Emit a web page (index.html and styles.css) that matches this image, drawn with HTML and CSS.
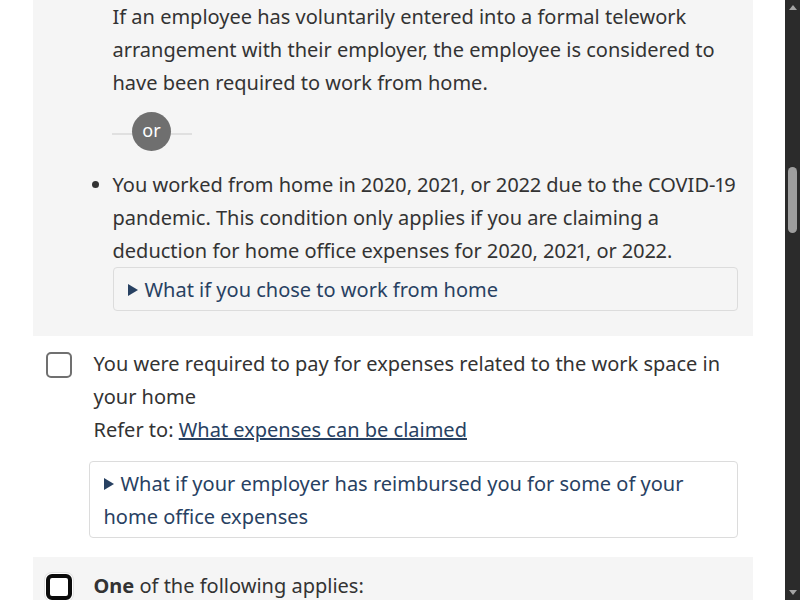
FILE: index.html
```html
<!DOCTYPE html>
<html lang="en">
<head>
<meta charset="utf-8">
<title>Home office expenses – eligibility</title>
<link rel="stylesheet" href="styles.css">
</head>
<body>
<div class="page">
  <main class="content">
    <div class="container">
      <section class="item shaded first">
        <div class="check-space"></div>
        <div class="body">
          <div class="indent">
            <p>If an employee has voluntarily entered into a formal telework arrangement with their employer, the employee is considered to have been required to work from home.</p>
            <div class="or"><span>or</span></div>
            <ul class="conds">
              <li>You worked from home in 2020, 2021, or 2022 due to the COVID-19 pandemic. This condition only applies if you are claiming a deduction for home office expenses for 2020, 2021, or 2022.
                <details class="more"><summary>What if you chose to work from home</summary></details>
              </li>
            </ul>
          </div>
        </div>
      </section>

      <section class="item">
        <div class="check"></div>
        <div class="body">
          <p>You were required to pay for expenses related to the work space in your home<br>Refer to: <a href="#">What expenses can be claimed</a></p>
          <details class="more shift"><summary>What if your employer has reimbursed you for some of your home office expenses</summary></details>
        </div>
      </section>

      <section class="item shaded last">
        <div class="check focus"></div>
        <div class="body">
          <p><strong>One</strong> of the following applies:</p>
          <ul class="conds">
            <li>You have a home office that is used more than 50% of the time for work</li>
          </ul>
        </div>
      </section>
    </div>
  </main>
  <aside class="scrollbar">
    <div class="arrow up"></div>
    <div class="thumb"></div>
    <div class="arrow down"></div>
  </aside>
</div>
</body>
</html>
```
FILE: styles.css
```css
html, body {
  margin: 0;
  padding: 0;
  height: 100%;
  overflow: hidden;
  background: #fff;
}
body {
  font-family: "Noto Sans", "Open Sans", sans-serif;
  font-size: 20px;
  line-height: 33px;
  color: #333;
  font-variant-numeric: proportional-nums;
}
.page {
  display: flex;
  height: 100vh;
}
.content {
  flex: 1;
  min-width: 0;
}
.container {
  width: 720px;
  margin: 0 auto;
}
p { margin: 0; }
a { color: #284162; }

.item {
  display: flex;
  gap: 22px;
  padding: 11px 15px 19px 13px;
}
.item.shaded { background: #f5f5f5; }
.item.first { padding-top: 0; padding-bottom: 25px; }
.item.last { padding-top: 12px; }

.check-space { flex: 0 0 26px; }
.check {
  flex: 0 0 26px;
  height: 26px;
  box-sizing: border-box;
  margin-top: 5px;
  border: 2px solid #707070;
  border-radius: 5px;
  background: #fff;
}
.check.focus {
  margin-top: 5px;
  border: 4px solid #0b0b0b;
  border-radius: 6px;
  box-shadow: 0 0 0 1px #fff, 0 0 0 2px #e2e2e2;
}
.body { flex: 1; min-width: 0; }

.indent { padding-left: 20px; margin-left: -1px; }
.conds { margin: 0; padding: 0; }
.item:not(.first) .conds { padding-left: 20px; }

.or {
  width: 80px;
  margin: 13px 0 17px -1px;
  display: flex;
  justify-content: center;
  background: linear-gradient(#e0e0e0, #e0e0e0) no-repeat 0 21px / 100% 2px;
}
.or span {
  width: 39px;
  height: 39px;
  border-radius: 50%;
  background: #6f6f6f;
  color: #fff;
  font-size: 18px;
  line-height: 37px;
  text-align: center;
}

.more {
  border: 1px solid #dcdcdc;
  border-radius: 4px;
  padding: 5px 15px 4px 14px;
}
.more summary {
  display: block;
  list-style: none;
  color: #284162;
  cursor: pointer;
}
.more summary::-webkit-details-marker { display: none; }
.more summary::before {
  content: "";
  display: inline-block;
  width: 0;
  height: 0;
  border-left: 10px solid currentColor;
  border-top: 6px solid transparent;
  border-bottom: 6px solid transparent;
  margin-right: 7px;
  vertical-align: 1px;
}
.more.shift { margin: 15px 0 0 -5px; padding-left: 14px; }

.scrollbar {
  flex: 0 0 15px;
  background: #2b2b2b;
  display: flex;
  flex-direction: column;
  align-items: center;
}
.arrow {
  width: 0;
  height: 0;
  border-left: 4px solid transparent;
  border-right: 4px solid transparent;
}
.arrow.up {
  margin-top: 5px;
  border-bottom: 5px solid #a3a3a3;
}
.arrow.down {
  margin-top: auto;
  margin-bottom: 5px;
  border-top: 5px solid #a3a3a3;
}
.thumb {
  margin-top: 157px;
  width: 9px;
  height: 66px;
  border-radius: 5px;
  background: #9e9e9e;
}
```
